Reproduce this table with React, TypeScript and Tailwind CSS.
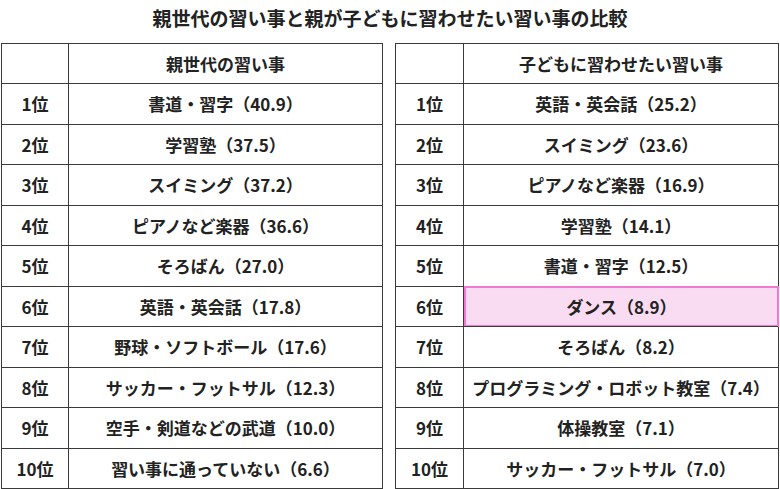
import React from "react";

const left = [
  "書道・習字（40.9）",
  "学習塾（37.5）",
  "スイミング（37.2）",
  "ピアノなど楽器（36.6）",
  "そろばん（27.0）",
  "英語・英会話（17.8）",
  "野球・ソフトボール（17.6）",
  "サッカー・フットサル（12.3）",
  "空手・剣道などの武道（10.0）",
  "習い事に通っていない（6.6）",
];

const right = [
  "英語・英会話（25.2）",
  "スイミング（23.6）",
  "ピアノなど楽器（16.9）",
  "学習塾（14.1）",
  "書道・習字（12.5）",
  "ダンス（8.9）",
  "そろばん（8.2）",
  "プログラミング・ロボット教室（7.4）",
  "体操教室（7.1）",
  "サッカー・フットサル（7.0）",
];

function Table({ title, items, firstW, width, highlight }: { title: string; items: string[]; firstW: string; width: string; highlight?: number }) {
  return (
    <div className={`${width} border border-[#3a3a3a] flex flex-col`}>
      <div className="flex h-[39px]">
        <div className={`${firstW} border-r border-[#3a3a3a]`} />
        <div className="flex-1 flex items-center justify-center">{title}</div>
      </div>
      {items.map((t, i) => (
        <div key={i} className="flex h-[40.5px] border-t border-[#3a3a3a]">
          <div className={`${firstW} border-r border-[#3a3a3a] flex items-center justify-center`}>{i + 1}位</div>
          {highlight === i ? (
            <div className="flex-1 flex items-center justify-center border-2 border-[#f07ad0] -mt-px -mb-px -mr-px bg-[#f9dcf1]">
              {t}
            </div>
          ) : (
            <div className="flex-1 flex items-center justify-center">{t}</div>
          )}
        </div>
      ))}
    </div>
  );
}

export default function App() {
  return (
    <div
      className="w-[780px] h-[489px] bg-white text-[#222] font-bold overflow-hidden"
      style={{ fontFamily: '"Noto Sans CJK JP", "Noto Sans", sans-serif' }}
    >
      <div className="h-[43px] flex items-start justify-center pt-[5px] text-[19px] leading-[26px]">
        親世代の習い事と親が子どもに習わせたい習い事の比較
      </div>
      <div className="flex pl-[1px] gap-[12px] text-[17px]">
        <Table title="親世代の習い事" items={left} firstW="w-[67px]" width="w-[382px]" />
        <Table title="子どもに習わせたい習い事" items={right} firstW="w-[68px]" width="w-[384px]" highlight={5} />
      </div>
    </div>
  );
}
